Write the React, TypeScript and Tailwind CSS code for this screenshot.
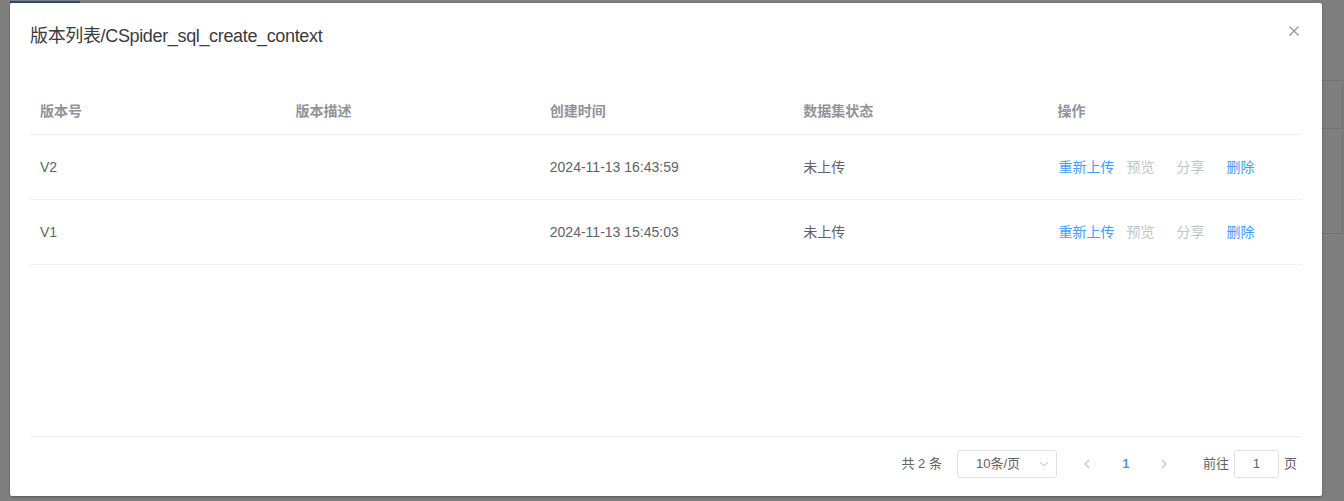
import React from "react";

const FONT = '"Liberation Sans", "Noto Sans CJK SC", sans-serif';

const rows = [
  { v: "V2", desc: "", time: "2024-11-13 16:43:59", status: "未上传" },
  { v: "V1", desc: "", time: "2024-11-13 15:45:03", status: "未上传" },
];

function Actions() {
  return (
    <div className="flex items-center text-[14px] leading-[23px]">
      <span className="text-[#409eff]">重新上传</span>
      <span className="ml-[12px] text-[#c0c4cc]">预览</span>
      <span className="ml-[22px] text-[#c0c4cc]">分享</span>
      <span className="ml-[22px] text-[#409eff]">删除</span>
    </div>
  );
}

export default function App() {
  return (
    <div
      className="relative w-[1344px] h-[501px] overflow-hidden bg-[#7f7f7f]"
      style={{ fontFamily: FONT }}
    >
      {/* dimmed page behind the overlay */}
      <div className="absolute left-[10px] top-[1px] w-[70px] h-[2px] bg-[#20507f]" />
      <div className="absolute left-[1322px] top-[80px] w-[22px] h-px bg-[#727272]" />
      <div className="absolute left-[1322px] top-[128px] w-[22px] h-px bg-[#727272]" />
      <div className="absolute left-[1322px] top-[233px] w-[22px] h-px bg-[#727272]" />
      <div className="absolute left-[1342px] top-[80px] w-px h-[153px] bg-[#727272]" />

      <div className="relative pl-[10px] pt-[3px]">
        <div className="w-[1312px] h-[493px] bg-white rounded-[2px] shadow-[0_1px_3px_rgba(0,0,0,0.3)] flex flex-col">
          {/* header */}
          <div className="relative pt-[21px] px-[20px] pb-[10px]">
            <div className="text-[18px] leading-[24px] text-[#3a3b3e] tracking-[-0.35px]">
              版本列表/CSpider_sql_create_context
            </div>
            <div className="absolute right-[23px] top-[23px] text-[#909399]">
              <svg width="10" height="10" viewBox="0 0 10 10">
                <path d="M0.5 0.5 L9.5 9.5 M9.5 0.5 L0.5 9.5" stroke="#909399" strokeWidth="1.2" />
              </svg>
            </div>
          </div>

          {/* body */}
          <div className="px-[20px] pt-[30px]">
            <div className="h-[349px] border-b border-[#ebeef5] flex flex-col">
              <div className="grid grid-cols-5 h-[47px] border-b border-[#ebeef5] items-center text-[14px] font-bold text-[#909399]">
                <div className="pl-[10px]">版本号</div>
                <div className="pl-[11px]">版本描述</div>
                <div className="pl-[11px]">创建时间</div>
                <div className="pl-[10px]">数据集状态</div>
                <div className="pl-[10px]">操作</div>
              </div>
              {rows.map((r) => (
                <div
                  key={r.v}
                  className="grid grid-cols-5 h-[65px] border-b border-[#ebeef5] items-center text-[14px] text-[#606266]"
                >
                  <div className="pl-[10px]">{r.v}</div>
                  <div className="pl-[11px]">{r.desc}</div>
                  <div className="pl-[11px]">{r.time}</div>
                  <div className="pl-[10px]">{r.status}</div>
                  <div className="pl-[11px]">
                    <Actions />
                  </div>
                </div>
              ))}
            </div>

            {/* pagination */}
            <div className="flex items-center justify-end h-[28px] mt-[13px] pr-[5px] text-[13px] text-[#606266]">
              <span>共 2 条</span>
              <div className="ml-[15px] w-[100px] h-[28px] border border-[#dcdfe6] rounded-[3px] flex items-center relative">
                <span className="pl-[18px]">10条/页</span>
                <svg className="absolute right-[7px] top-[9px]" width="10" height="8" viewBox="0 0 10 8">
                  <path d="M1 2 L5 6 L9 2" fill="none" stroke="#c0c4cc" strokeWidth="1" />
                </svg>
              </div>
              <div className="ml-[15px] w-[30px] h-[28px] flex items-center justify-center">
                <svg width="8" height="10" viewBox="0 0 8 10">
                  <path d="M6 1 L2 5 L6 9" fill="none" stroke="#c0c4cc" strokeWidth="1.3" />
                </svg>
              </div>
              <div className="ml-[9px] w-[30px] h-[28px] flex items-center justify-center font-bold text-[#409eff]">
                1
              </div>
              <div className="ml-[8px] w-[30px] h-[28px] flex items-center justify-center">
                <svg width="8" height="10" viewBox="0 0 8 10">
                  <path d="M2 1 L6 5 L2 9" fill="none" stroke="#c0c4cc" strokeWidth="1.3" />
                </svg>
              </div>
              <span className="ml-[24px]">前往</span>
              <div className="ml-[5px] w-[45px] h-[28px] border border-[#dcdfe6] rounded-[3px] flex items-center justify-center">
                1
              </div>
              <span className="ml-[5px]">页</span>
            </div>
          </div>
        </div>
      </div>
    </div>
  );
}
